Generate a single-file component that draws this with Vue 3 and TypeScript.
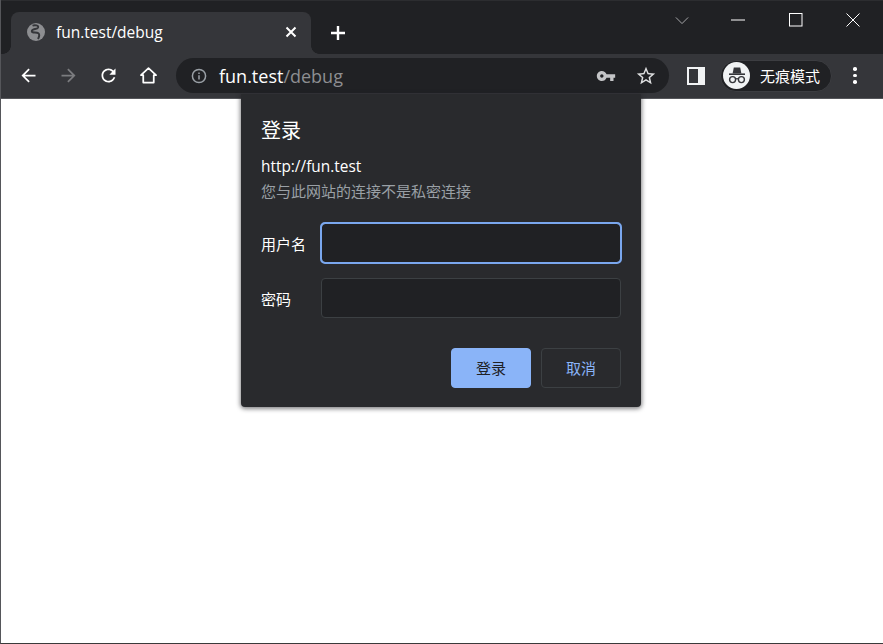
<template>
  <div class="window">
    <header class="titlebar">
      <div class="tab">
        <svg class="favicon" viewBox="0 0 18 18">
          <circle cx="9" cy="9" r="9" />
          <path d="M5.5 2.6C8 1.6 12 2.4 11 4.6 10 6.6 5 5.4 4.8 8.2 4.7 10.4 9.5 8.8 11.4 10.2 13 11.4 12 14 11 16" />
        </svg>
        <span class="tab-title">fun.test/debug</span>
        <svg class="tab-close" viewBox="0 0 12 12"><path d="M1.5 1.5l9 9M10.5 1.5l-9 9" /></svg>
      </div>
      <svg class="new-tab" viewBox="0 0 16 16"><path d="M8 1v14M1 8h14" /></svg>
      <div class="window-controls">
        <svg class="ctl ctl-chevron" viewBox="0 0 16 8"><path d="M1 .5l7 7 7-7" /></svg>
        <svg class="ctl ctl-min" viewBox="0 0 14 2"><path d="M0 1h14" /></svg>
        <svg class="ctl ctl-max" viewBox="0 0 14 14"><rect x=".5" y=".5" width="12.5" height="12.5" /></svg>
        <svg class="ctl ctl-close" viewBox="0 0 14 14"><path d="M.5.5l13 13M13.5.5l-13 13" /></svg>
      </div>
    </header>

    <nav class="toolbar">
      <svg class="nav-icon" viewBox="0 0 24 24"><path d="M20 11H7.83l5.59-5.59L12 4l-8 8 8 8 1.41-1.41L7.83 13H20v-2z" /></svg>
      <svg class="nav-icon disabled" viewBox="0 0 24 24"><path d="M4 11h12.17l-5.59-5.59L12 4l8 8-8 8-1.41-1.41L16.17 13H4v-2z" /></svg>
      <svg class="nav-icon" viewBox="0 0 24 24"><path d="M17.65 6.35C16.2 4.9 14.21 4 12 4c-4.42 0-7.99 3.58-7.99 8s3.57 8 7.99 8c3.73 0 6.84-2.55 7.73-6h-2.08c-.82 2.33-3.04 4-5.65 4-3.31 0-6-2.69-6-6s2.69-6 6-6c1.66 0 3.14.69 4.22 1.78L13 11h7V4l-2.35 2.35z" /></svg>
      <svg class="nav-icon home" viewBox="0 0 24 24"><path d="M12 3.6L3.4 11.6h2.6v8.4h12v-8.4h2.6z" /></svg>

      <div class="omnibox">
        <svg class="info" viewBox="0 0 16 16">
          <circle cx="8" cy="8" r="6.6" />
          <path d="M8 7.2v4.2M8 4.4v1.6" />
        </svg>
        <span class="url"><span class="host">fun.test</span><span class="path">/debug</span></span>
        <svg class="omni-icon key" viewBox="0 0 24 24"><path d="M12.65 10C11.83 7.67 9.61 6 7 6c-3.31 0-6 2.69-6 6s2.69 6 6 6c2.61 0 4.83-1.67 5.65-4H17v4h4v-4h2v-4H12.65zM7 14c-1.1 0-2-.9-2-2s.9-2 2-2 2 .9 2 2-.9 2-2 2z" /></svg>
        <svg class="omni-icon star" viewBox="0 0 24 24"><path d="M22 9.24l-7.19-.62L12 2 9.19 8.63 2 9.24l5.46 4.73L5.82 21 12 17.27 18.18 21l-1.63-7.03L22 9.24zM12 15.4l-3.76 2.27 1-4.28-3.32-2.88 4.38-.38L12 6.1l1.71 4.04 4.38.38-3.32 2.88 1 4.28L12 15.4z" /></svg>
      </div>

      <div class="side-panel"><span></span></div>

      <div class="incognito">
        <span class="avatar">
          <svg viewBox="0 0 24 24">
            <path class="hat" d="M7.6 9.6L8.8 3.4h6.4l1.2 6.2z" />
            <path class="brim" d="M4 10.2h16" />
            <circle cx="7.6" cy="15.6" r="3" />
            <circle cx="16.4" cy="15.6" r="3" />
            <path d="M10.6 15c.9-.5 1.9-.5 2.8 0" />
          </svg>
        </span>
        <span class="incognito-label">无痕模式</span>
      </div>

      <div class="menu"><i></i><i></i><i></i></div>
    </nav>

    <main class="page">
      <section class="dialog">
        <h2 class="dialog-title">登录</h2>
        <p class="origin">http://fun.test</p>
        <p class="warning">您与此网站的连接不是私密连接</p>
        <label class="field">
          <span>用户名</span>
          <input class="input focused" type="text" />
        </label>
        <label class="field second">
          <span>密码</span>
          <input class="input" type="password" />
        </label>
        <div class="actions">
          <button class="btn primary" type="button">登录</button>
          <button class="btn" type="button">取消</button>
        </div>
      </section>
    </main>
  </div>
</template>

<script setup lang="ts">
</script>

<style>
html,
body {
  margin: 0;
  overflow: hidden;
}
</style>

<style scoped>
.window {
  display: flex;
  flex-direction: column;
  height: 644px;
  box-sizing: border-box;
  border-left: 1px solid #55565a;
  border-bottom: 1px solid #3a3a3a;
  background: #fff;
  font-family: "Open Sans", "Noto Sans CJK SC", sans-serif;
}

.titlebar {
  display: flex;
  align-items: flex-end;
  height: 54px;
  flex-shrink: 0;
  padding-left: 10px;
  background: #202124;
  border-top: 1px solid #2c2d30;
  box-sizing: border-box;
}

.tab {
  position: relative;
  display: flex;
  align-items: center;
  width: 300px;
  height: 42px;
  box-sizing: border-box;
  padding: 0 14px 2px 16px;
  border-radius: 8px 8px 0 0;
  background: #35363a;
  color: #fff;
}

.tab::before,
.tab::after {
  content: "";
  position: absolute;
  bottom: 0;
  width: 8px;
  height: 8px;
}

.tab::before {
  left: -8px;
  background: radial-gradient(circle at 0 0, #202124 7.5px, #35363a 8px);
}

.tab::after {
  right: -8px;
  background: radial-gradient(circle at 100% 0, #202124 7.5px, #35363a 8px);
}

.favicon {
  width: 18px;
  height: 18px;
  flex-shrink: 0;
}

.favicon circle {
  fill: #8d8e91;
}

.favicon path {
  fill: none;
  stroke: #35363a;
  stroke-width: 2;
}

.tab-title {
  margin-left: 11px;
  font-size: 15.5px;
  flex: 1;
}

.tab-close {
  width: 12px;
  height: 12px;
  fill: none;
  stroke: #fff;
  stroke-width: 2;
}

.new-tab {
  width: 16px;
  height: 16px;
  margin: 0 0 13px 19px;
  fill: none;
  stroke: #fff;
  stroke-width: 2.4;
}

.window-controls {
  display: flex;
  align-items: center;
  align-self: flex-start;
  height: 38px;
  margin-left: auto;
  fill: none;
  stroke: #fff;
  stroke-width: 1;
}

.ctl {
  display: block;
  fill: none;
}

.ctl-chevron {
  width: 14px;
  height: 7px;
  margin-right: 42px;
  stroke: #b8b9bb;
}

.ctl-min {
  width: 14px;
  height: 2px;
  margin-right: 44px;
}

.ctl-max {
  width: 14px;
  height: 14px;
  margin-right: 43px;
}

.ctl-close {
  width: 14px;
  height: 14px;
  margin-right: 23px;
}

.toolbar {
  display: flex;
  align-items: center;
  height: 45px;
  flex-shrink: 0;
  box-sizing: border-box;
  padding: 0 0 1px 17px;
  background: #35363a;
  border-bottom: 1px solid #55565a;
}

.nav-icon {
  width: 21px;
  height: 21px;
  margin-right: 19px;
  fill: #fff;
}

.nav-icon.disabled {
  fill: #7b7c7f;
}

.nav-icon.home {
  margin-right: 17px;
  fill: none;
  stroke: #fff;
  stroke-width: 2;
  stroke-linejoin: round;
}

.omnibox {
  display: flex;
  align-items: center;
  width: 493px;
  height: 35px;
  box-sizing: border-box;
  padding: 0 12px 0 15px;
  border-radius: 18px;
  background: #202124;
}

.info {
  width: 16px;
  height: 16px;
  fill: none;
  stroke: #9aa0a6;
  stroke-width: 1.5;
}

.url {
  margin-left: 12px;
  font-size: 18px;
  flex: 1;
}

.host {
  color: #fff;
}

.path {
  color: #8d8e91;
}

.omni-icon {
  width: 20px;
  height: 20px;
  fill: #c4c5c7;
}

.star {
  width: 22px;
  height: 22px;
  margin-left: 19px;
  fill: #dfe0e1;
}

.side-panel {
  display: flex;
  width: 18px;
  height: 18px;
  margin-left: 18px;
  box-sizing: border-box;
  padding: 2px 7px 2px 2px;
  background: #f1f3f4;
}

.side-panel span {
  flex: 1;
  background: #35363a;
}

.incognito {
  display: flex;
  align-items: center;
  width: 112px;
  height: 32px;
  margin-left: 15px;
  box-sizing: border-box;
  padding-left: 2px;
  border: 1px solid #3c3d41;
  border-radius: 16px;
  background: #202124;
}

.avatar {
  display: flex;
  align-items: center;
  justify-content: center;
  width: 27px;
  height: 27px;
  border-radius: 50%;
  background: #f1f3f4;
}

.avatar svg {
  width: 24px;
  height: 24px;
  fill: none;
  stroke: #35363a;
  stroke-width: 1.4;
}

.avatar .hat {
  fill: #35363a;
  stroke: none;
}

.avatar .brim {
  stroke-width: 1.6;
}

.incognito-label {
  margin-left: 10px;
  font-size: 15px;
  color: #fff;
}

.menu {
  display: flex;
  flex-direction: column;
  gap: 3px;
  margin-left: 21px;
}

.menu i {
  width: 3.5px;
  height: 3.5px;
  border-radius: 50%;
  background: #fff;
}

.page {
  position: relative;
  flex: 1;
  background: #fff;
}

.dialog {
  position: absolute;
  top: -5px;
  left: 240px;
  width: 400px;
  height: 313px;
  box-sizing: border-box;
  padding: 24px 20px 0;
  border-radius: 0 0 4px 4px;
  background: #292a2d;
  box-shadow: 0 1px 4px 1px rgba(32, 33, 36, 0.55);
  color: #fff;
}

.dialog-title {
  margin: 0;
  font-size: 20px;
  font-weight: 400;
  line-height: 26px;
}

.origin {
  margin: 12px 0 0;
  font-size: 15.4px;
  line-height: 22px;
}

.warning {
  margin: 2px 0 0;
  font-size: 15px;
  line-height: 22px;
  color: #9aa0a6;
}

.field {
  display: flex;
  align-items: center;
  margin-top: 21px;
  font-size: 15px;
}

.field.second {
  margin-top: 15px;
}

.field span {
  width: 60px;
  flex-shrink: 0;
}

.input {
  width: 300px;
  height: 40px;
  box-sizing: border-box;
  padding: 0 8px;
  border: 1px solid #3c4043;
  border-radius: 4px;
  outline: none;
  background: #202124;
  color: #fff;
}

.input.focused {
  border-color: #8ab4f8;
  outline: 2px solid #7aa7ee;
  outline-offset: -1px;
}

.actions {
  display: flex;
  justify-content: flex-end;
  gap: 10px;
  margin-top: 30px;
}

.btn {
  width: 80px;
  height: 40px;
  padding: 0 0 2px;
  border: 1px solid #3c4043;
  border-radius: 4px;
  background: transparent;
  color: #8ab4f8;
  font-family: inherit;
  font-size: 15px;
}

.btn.primary {
  border-color: #8ab4f8;
  background: #8ab4f8;
  color: #202124;
}
</style>
